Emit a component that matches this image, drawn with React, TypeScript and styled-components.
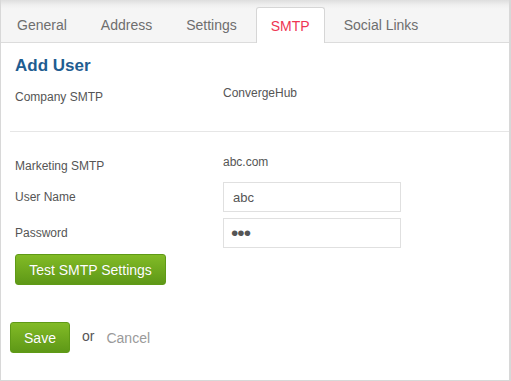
import React from 'react'
import styled, { createGlobalStyle } from 'styled-components'

const GlobalStyle = createGlobalStyle`
  html, body {
    margin: 0;
    padding: 0;
    background: #fff;
  }
  * {
    box-sizing: border-box;
  }
`

const Panel = styled.div`
  width: 511px;
  height: 381px;
  border: 1px solid #d8d8d8;
  border-top: none;
  border-right-width: 2px;
  font-family: 'Liberation Sans', Arial, sans-serif;
  color: #555;
  background: #fff;
  display: flex;
  flex-direction: column;
`

const TabBar = styled.ul`
  display: flex;
  align-items: flex-end;
  margin: 0;
  padding: 0 0 0 1px;
  list-style: none;
  height: 43px;
  background: linear-gradient(#dedede 0px, #efefef 5px, #f5f5f5 9px, #f5f5f5);
  border-bottom: 1px solid #dcdcdc;
`

const Tab = styled.li<{ $active?: boolean }>`
  height: ${(p) => (p.$active ? '36px' : '35px')};
  margin-right: 4px;
  margin-bottom: ${(p) => (p.$active ? '-1px' : '0')};
  padding: 0 14px;
  display: flex;
  align-items: center;
  font-size: 14px;
  color: ${(p) => (p.$active ? '#ee3553' : '#6e6e6e')};
  background: ${(p) => (p.$active ? '#fff' : 'transparent')};
  border: 1px solid ${(p) => (p.$active ? '#d6d6d6' : 'transparent')};
  border-bottom: none;
  border-radius: 3px 3px 0 0;
`

const Body = styled.div`
  padding: 13px 0 0 9px;
  display: flex;
  flex-direction: column;
`

const Heading = styled.h2`
  margin: 0 0 0 5px;
  font-size: 17px;
  line-height: 20px;
  font-weight: bold;
  color: #1f5d91;
`

const Row = styled.div<{ $gap?: number }>`
  display: grid;
  grid-template-columns: 208px 178px;
  padding-left: 5px;
  margin-top: ${(p) => p.$gap ?? 0}px;
  align-items: start;
`

const Label = styled.div<{ $offset?: number }>`
  font-size: 12px;
  line-height: 16px;
  color: #555;
  padding-top: ${(p) => p.$offset ?? 4}px;
`

const Value = styled.div`
  font-size: 12px;
  line-height: 16px;
  color: #555;
`

const Input = styled.input`
  width: 178px;
  height: 30px;
  border: 1px solid #e0e0e0;
  padding: 0 9px;
  font-family: 'Liberation Sans', Arial, sans-serif;
  font-size: 13px;
  color: #555;
  outline: none;
  background: #fff;
  &[type='password'] {
    font-size: 21px;
    letter-spacing: -1px;
    padding-left: 7px;
  }
`

const Divider = styled.hr`
  margin: 26px 0 0 0;
  border: none;
  border-top: 1px solid #e6e6e6;
  height: 0;
`

const GreenButton = styled.button<{ $width: number }>`
  width: ${(p) => p.$width}px;
  height: 31px;
  padding: 0;
  border: 1px solid #5f9a16;
  border-radius: 3px;
  background: linear-gradient(#82bb26, #5e9817);
  color: #fff;
  font-family: 'Liberation Sans', Arial, sans-serif;
  font-size: 14px;
  text-shadow: 0 0 1px rgba(0, 0, 0, 0.15);
  cursor: pointer;
`

const ButtonRow = styled.div`
  padding-left: 5px;
  margin-top: 6px;
`

const Actions = styled.div`
  display: flex;
  align-items: center;
  margin-top: 37px;
  font-size: 14px;
`

const Or = styled.span`
  margin-left: 12px;
  color: #555;
  position: relative;
  top: -2px;
`

const Cancel = styled.a`
  margin-left: 12px;
  color: #9a9a9a;
  text-decoration: none;
  cursor: pointer;
`

const tabs = ['General', 'Address', 'Settings', 'SMTP', 'Social Links']

const App = () => (
  <>
    <GlobalStyle />
    <Panel>
      <TabBar>
        {tabs.map((t) => (
          <Tab key={t} $active={t === 'SMTP'}>
            {t}
          </Tab>
        ))}
      </TabBar>

      <Body>
        <Heading>Add User</Heading>
        <Row $gap={9}>
          <Label>Company SMTP</Label>
          <Value>ConvergeHub</Value>
        </Row>

        <Divider />

        <Row $gap={22}>
          <Label>Marketing SMTP</Label>
          <Value>abc.com</Value>
        </Row>
        <Row $gap={8}>
          <Label $offset={7}>User Name</Label>
          <Input defaultValue="abc" />
        </Row>
        <Row $gap={6}>
          <Label $offset={7}>Password</Label>
          <Input type="password" defaultValue="abc" />
        </Row>
        <ButtonRow>
          <GreenButton $width={151}>Test SMTP Settings</GreenButton>
        </ButtonRow>

        <Actions>
          <GreenButton $width={60}>Save</GreenButton>
          <Or>or</Or>
          <Cancel>Cancel</Cancel>
        </Actions>
      </Body>
    </Panel>
  </>
)

export default App
